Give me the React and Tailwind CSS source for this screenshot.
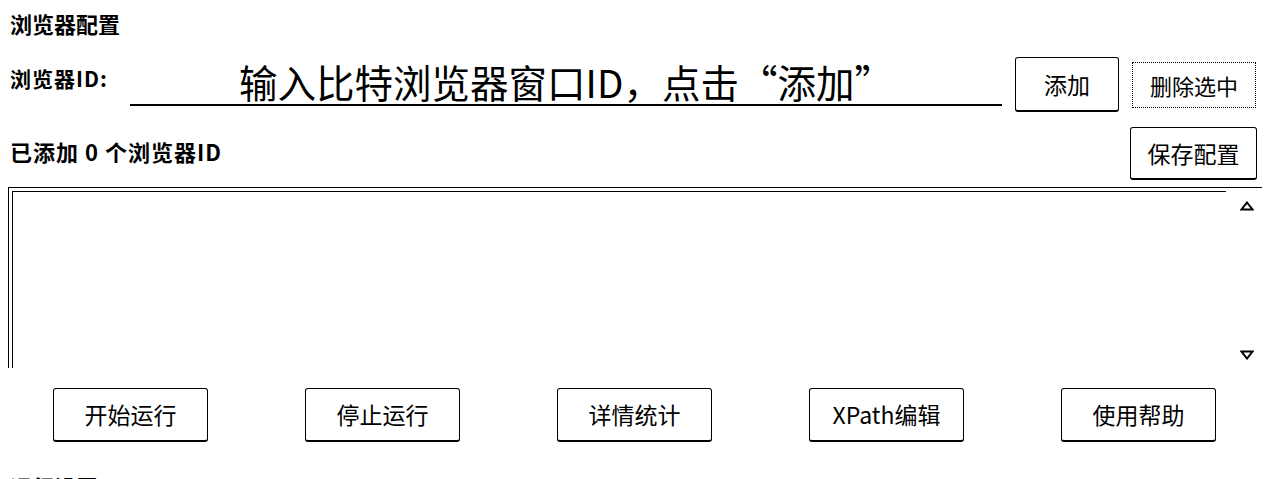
import React, { useState } from 'react';

const font = { fontFamily: '"Noto Sans CJK SC", "Noto Sans", sans-serif' };

const Btn = ({ children, className = '' }) => (
    <button
        className={`flex items-center justify-center rounded-[3px] border border-b-2 border-black bg-white text-[23px] leading-none text-black ${className}`}
    >
        {children}
    </button>
);

const ArrowUp = () => (
    <svg width="14" height="10" viewBox="0 0 14 10">
        <polygon points="7,1.5 12.5,8.5 1.5,8.5" fill="none" stroke="black" strokeWidth="2" />
    </svg>
);

const ArrowDown = () => (
    <svg width="14" height="10" viewBox="0 0 14 10">
        <polygon points="1.5,1.5 12.5,1.5 7,8.5" fill="none" stroke="black" strokeWidth="2" />
    </svg>
);

export default function App() {
    const [value, setValue] = useState('');
    const ids = [];

    return (
        <div className="h-[479px] w-[1280px] overflow-hidden bg-white text-black" style={font}>
            {/* 浏览器配置 */}
            <div className="flex h-[46px] items-center pl-[10px] text-[22px] font-bold">浏览器配置</div>

            {/* ID row */}
            <div className="mt-[11px] flex h-[55px] items-start pl-[10px]">
                <label className="mt-[7px] w-[120px] text-[21px] font-semibold leading-[28px] tracking-[1px]">浏览器ID:</label>
                <input
                    value={value}
                    onChange={(e) => setValue(e.target.value)}
                    placeholder="输入比特浏览器窗口ID，点击“添加”"
                    className="h-[49px] w-[872px] border-b-2 border-black bg-transparent text-center text-[38.5px] leading-none outline-none placeholder:text-black"
                />
                <Btn className="ml-[13px] h-[55px] w-[104px]">添加</Btn>
                <div className="ml-[13px] mt-[5px] flex h-[46px] w-[124px] items-center justify-center border border-dotted border-black text-[22px]">
                    删除选中
                </div>
            </div>

            {/* 已添加 row */}
            <div className="mt-[15px] flex h-[53px] items-start justify-between pl-[10px] pr-[23px]">
                <div className="mt-[10px] text-[22px] font-semibold leading-[28px] tracking-[1px]">
                    已添加 {ids.length} 个浏览器ID
                </div>
                <Btn className="h-[53px] w-[127px]">保存配置</Btn>
            </div>

            {/* ID list */}
            <div className="ml-[8px] mt-[7px] flex h-[181px] w-[1254px] border-l border-t border-black pl-[3px] pt-[3px]">
                <div className="flex-1 border-l border-t border-black"></div>
                <div className="flex w-[36px] flex-col items-start justify-between pb-[8px] pl-[14px] pt-[10px]">
                    <ArrowUp />
                    <ArrowDown />
                </div>
            </div>

            {/* actions */}
            <div className="mt-[20px] flex gap-[97px] pl-[53px]">
                <Btn className="h-[54px] w-[155px]">开始运行</Btn>
                <Btn className="h-[54px] w-[155px]">停止运行</Btn>
                <Btn className="h-[54px] w-[155px]">详情统计</Btn>
                <Btn className="h-[54px] w-[155px]">XPath编辑</Btn>
                <Btn className="h-[54px] w-[155px]">使用帮助</Btn>
            </div>

            {/* 运行设置 */}
            <div className="mt-[21px] flex h-[46px] items-center pl-[10px] text-[22px] font-bold">运行设置</div>
        </div>
    );
}
